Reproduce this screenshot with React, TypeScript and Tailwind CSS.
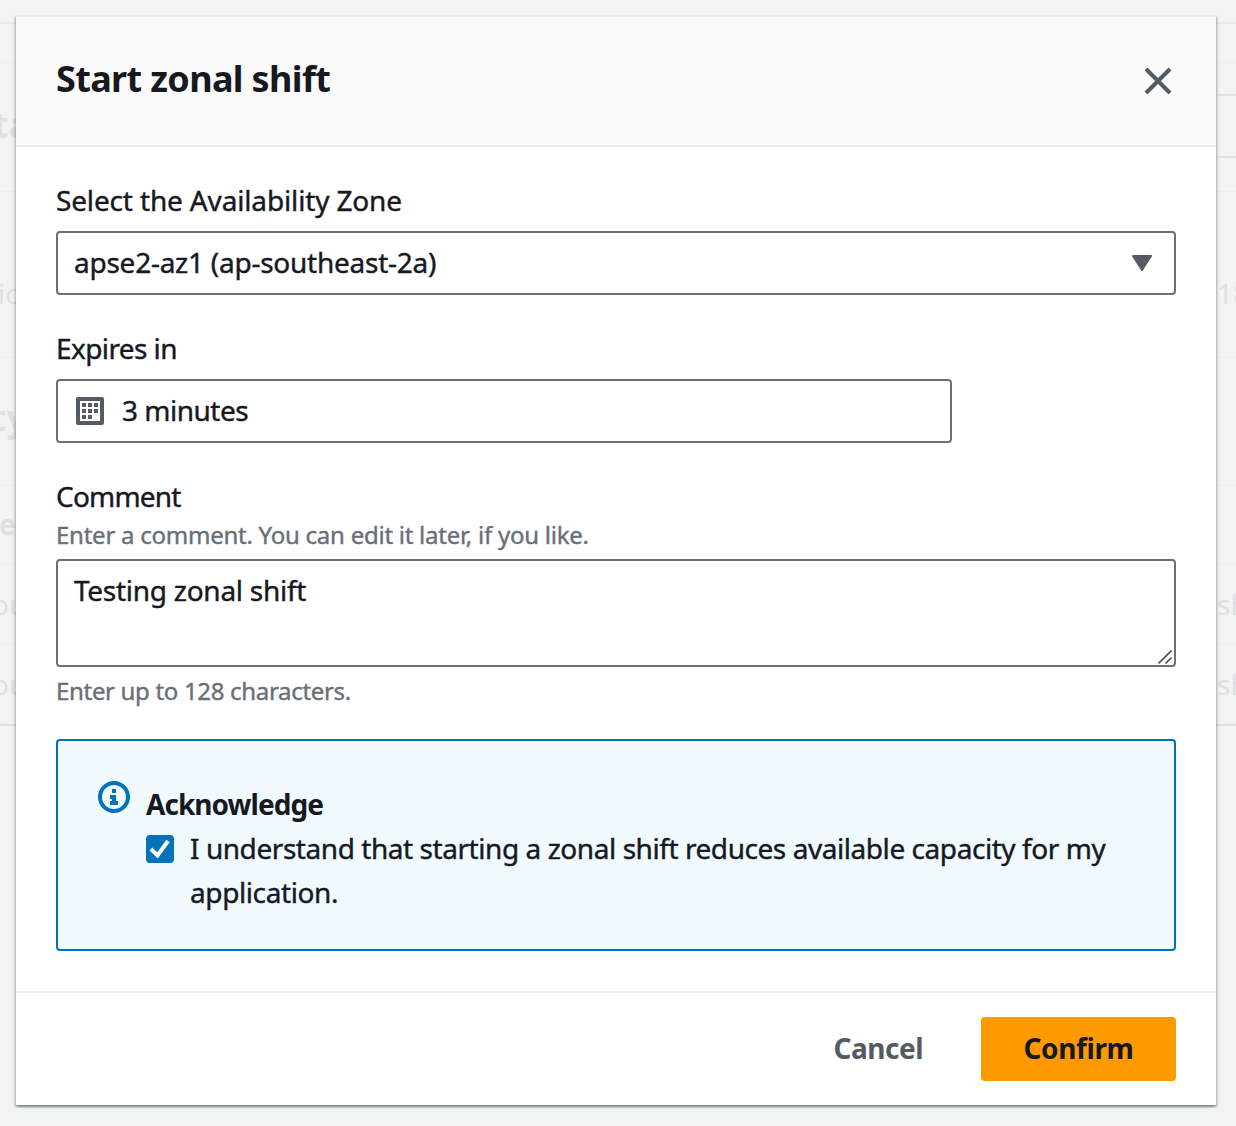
import type { ReactNode } from 'react';

type RowProps = {
  height: string;
  left?: ReactNode;
  right?: ReactNode;
};

function BackdropRow({ height, left, right }: RowProps) {
  return (
    <div className={`flex items-center justify-between overflow-hidden border-b border-[#edefef] whitespace-nowrap ${height}`}>
      <div className="w-9">{left}</div>
      <div className="w-[19px] shrink-0">{right}</div>
    </div>
  );
}

function Backdrop() {
  return (
    <div className="h-full bg-[#f2f4f4] pt-[22px] text-[28px] leading-none text-[#dee1e1]">
      <div className="border-t-2 border-b-2 border-t-[#e6e9e9] border-b-[#dde1e1]">
        <BackdropRow height="h-[39px]" />
        <BackdropRow
          height="h-[129px]"
          left={<span className="relative -top-0.5 -ml-[7px] text-[36px] font-bold">ta</span>}
          right={<div className="-mt-0.5 h-16 border-y-2 border-[#e0e3e3]" />}
        />
        <BackdropRow height="h-[166px]" left={<span className="relative top-[18px] -ml-0.5">ic</span>} right={<span className="relative top-[18px]">18</span>} />
        <BackdropRow height="h-[128px]" left={<span className="relative -top-1 -ml-[9px] text-[36px] font-bold">ty</span>} />
        <BackdropRow height="h-[78px]" left={<span className="relative -top-px -ml-px font-bold">e</span>} />
        <BackdropRow height="h-[80px]" left={<span className="-ml-2">ou</span>} right="sh" />
        <BackdropRow height="h-[80px]" left={<span className="-ml-2">ou</span>} right="sh" />
      </div>
    </div>
  );
}

function CloseIcon() {
  return (
    <svg width="32" height="32" viewBox="0 0 32 32" fill="none" stroke="#545b64" strokeWidth="4">
      <path d="M4 4 28 28M28 4 4 28" />
    </svg>
  );
}

function CalendarIcon() {
  return (
    <svg width="28" height="28" viewBox="0 0 28 28" fill="#545b64">
      <path fillRule="evenodd" d="M2 0H26A2 2 0 0 1 28 2V26A2 2 0 0 1 26 28H2A2 2 0 0 1 0 26V2A2 2 0 0 1 2 0ZM4 4V24H24V4Z" />
      <path d="M6 6h4v4H6zM12 6h4v4h-4zM18 6h4v4h-4zM6 12h4v4H6zM12 12h4v4h-4zM18 12h4v4h-4zM6 18h4v4H6zM12 18h4v4h-4z" />
    </svg>
  );
}

function InfoIcon() {
  return (
    <svg width="32" height="32" viewBox="0 0 32 32" fill="#0073bb">
      <circle cx="16" cy="16" r="14" fill="none" stroke="#0073bb" strokeWidth="4" />
      <path d="M14 8h4v4h-4zM12 14h6v6h2v4h-8v-4h2v-2h-2z" />
    </svg>
  );
}

function Modal() {
  return (
    <section
      role="dialog"
      className="absolute top-[15px] left-4 flex h-[1090px] w-[1200px] flex-col border-t-2 border-[#eaeded] bg-white shadow-[0_2px_2px_0_rgba(0,28,36,0.3),2px_2px_2px_0_rgba(0,28,36,0.15),-2px_2px_2px_0_rgba(0,28,36,0.15)]"
    >
      <header className="flex h-[130px] shrink-0 items-center justify-between border-b-2 border-[#eaeded] bg-[#fafafa] pr-[42px] pl-10">
        <h1 className="pb-1 text-[36px] leading-[44px] font-bold tracking-[-0.65px]">Start zonal shift</h1>
        <button aria-label="Close">
          <CloseIcon />
        </button>
      </header>

      <div className="flex flex-1 flex-col px-10 pt-[31px] [-webkit-text-stroke:0.4px]">
        <label className="leading-11">
          <span className="tracking-[-0.15px]">Select the Availability Zone</span>
        </label>
        <div className="mt-[9px] flex h-16 shrink-0 items-center justify-between rounded-[4px] border-2 border-[#687078] pr-[22px] pl-4">
          <span className="pb-0.5 tracking-[-0.25px]">apse2-az1 (ap-southeast-2a)</span>
          <svg width="20" height="16" viewBox="0 0 20 16" fill="#545b64" stroke="#545b64" strokeWidth="2" strokeLinejoin="round">
            <path d="M1 1H19L10 15Z" />
          </svg>
        </div>

        <label className="mt-[31px] leading-11">
          <span className="tracking-[-0.6px]">Expires in</span>
        </label>
        <div className="mt-[9px] flex h-16 w-[896px] shrink-0 items-center gap-[18px] rounded-[4px] border-2 border-[#687078] pl-[18px]">
          <CalendarIcon />
          <span className="pb-0.5 tracking-[-0.5px]">3 minutes</span>
        </div>

        <label className="mt-[31px] leading-11">
          <span className="tracking-[-0.8px]">Comment</span>
        </label>
        <p className="-mt-px text-[24px] leading-9 text-[#687078]">
          <span className="tracking-[-0.25px]">Enter a comment. You can edit it later, if you like.</span>
        </p>
        <div className="relative mt-1.5 h-[108px] shrink-0 rounded-[4px] border-2 border-[#687078] px-4 pt-[7px] leading-11">
          <span className="tracking-[-0.27px]">Testing zonal shift</span>
          <svg className="absolute right-0.5 bottom-px" width="14" height="14" viewBox="0 0 14 14" stroke="#545454" strokeWidth="1.6">
            <path d="M.5 13.5 13.5.5M7.5 13.5 13.5 7.5" />
          </svg>
        </div>
        <p className="mt-1.5 text-[24px] leading-9 text-[#687078]">
          <span className="tracking-[-0.32px]">Enter up to 128 characters.</span>
        </p>

        <div className="mt-[30px] flex h-[212px] shrink-0 gap-4 rounded-[4px] border-2 border-[#0073bb] bg-[#f1faff] pt-10 pl-10">
          <InfoIcon />
          <div className="pt-px leading-11">
            <h2 className="font-bold [-webkit-text-stroke:0]">
              <span className="tracking-[-0.95px]">Acknowledge</span>
            </h2>
            <div className="flex gap-4">
              <span className="mt-[9px] flex size-7 items-center justify-center rounded-[4px] bg-[#0073bb]">
                <svg width="28" height="28" viewBox="0 0 28 28" fill="none" stroke="#fff" strokeWidth="4">
                  <path d="M5 14 11.5 20.5 22 6" />
                </svg>
              </span>
              <p>
                <span className="tracking-[-0.44px]">I understand that starting a zonal shift reduces available capacity for my</span>
                <br />
                <span className="tracking-[-0.4px]">application.</span>
              </p>
            </div>
          </div>
        </div>
      </div>

      <footer className="flex h-[114px] shrink-0 items-center justify-end border-t-2 border-[#eaeded] pr-10 font-bold">
        <button className="mr-[58px] pb-0.5 text-[#545b64]">
          <span className="tracking-[-0.5px]">Cancel</span>
        </button>
        <button className="h-16 w-[195px] rounded-[4px] bg-[#ff9900] pb-0.5">
          <span className="tracking-[-0.4px]">Confirm</span>
        </button>
      </footer>
    </section>
  );
}

export default function App() {
  return (
    <main className="relative h-[1126px] w-[1236px] overflow-hidden bg-[#f2f4f4] font-['Noto_Sans',sans-serif] text-[28px] text-[#16191f]">
      <Backdrop />
      <Modal />
    </main>
  );
}
